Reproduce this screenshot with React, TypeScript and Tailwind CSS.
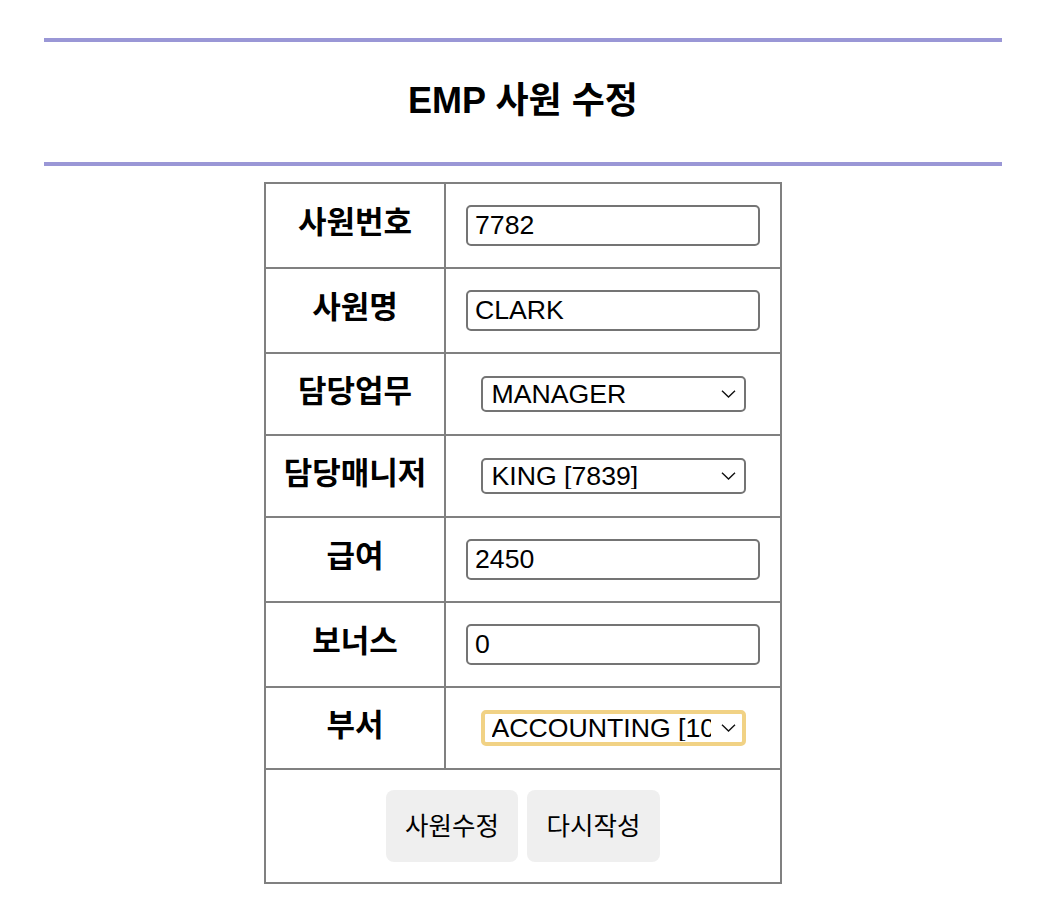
import React, { useState } from 'react';

type Field = {
  label: string;
  kind: 'input' | 'select';
  value: string;
  options?: string[];
  focused?: boolean;
};

const fields: Field[] = [
  { label: '사원번호', kind: 'input', value: '7782' },
  { label: '사원명', kind: 'input', value: 'CLARK' },
  { label: '담당업무', kind: 'select', value: 'MANAGER', options: ['ANALYST', 'CLERK', 'MANAGER', 'PRESIDENT', 'SALESMAN'] },
  { label: '담당매니저', kind: 'select', value: 'KING [7839]', options: ['KING [7839]', 'JONES [7566]', 'BLAKE [7698]'] },
  { label: '급여', kind: 'input', value: '2450' },
  { label: '보너스', kind: 'input', value: '0' },
  {
    label: '부서',
    kind: 'select',
    value: 'ACCOUNTING [10]',
    options: ['ACCOUNTING [10]', 'RESEARCH [20]', 'SALES [30]', 'OPERATIONS [40]'],
    focused: true,
  },
];

const Chevron = () => (
  <svg
    className="pointer-events-none absolute right-[10px] top-1/2 -translate-y-1/2 w-[15px] h-[9px]"
    viewBox="0 0 15 9"
    fill="none"
    stroke="#111"
    strokeWidth={1.4}
  >
    <path d="M1 1.2l6.5 6.3L14 1.2" />
  </svg>
);

const Row = ({ field, onChange }: { field: Field; onChange: (v: string) => void }) => {
  const height = field.kind === 'input' ? 'h-[85px]' : 'h-[82px]';
  return (
    <div className={`flex ${height} border-b-2 border-[#808080]`}>
      <div className="w-[180px] shrink-0 border-r-2 border-[#808080] flex items-center justify-center pb-1 text-[31px] font-bold text-black">
        {field.label}
      </div>
      <div className="flex-1 flex items-center justify-center">
        {field.kind === 'input' ? (
          <input
            type="text"
            value={field.value}
            onChange={(e) => onChange(e.target.value)}
            className="w-[294px] h-[41px] px-[7px] border-2 border-[#747474] rounded-[5px] bg-white text-[26.67px] text-black outline-none font-['Liberation_Sans',sans-serif]"
          />
        ) : (
          <div className="relative w-[265px] h-[36px]">
            <select
              value={field.value}
              onChange={(e) => onChange(e.target.value)}
              className={`appearance-none w-full h-full pr-[31px] rounded-[5px] bg-white text-[26.67px] leading-none text-black outline-none overflow-hidden whitespace-nowrap font-['Liberation_Sans',sans-serif] ${
                field.focused ? 'border-[4px] border-[#f1d285] pl-[7px]' : 'border-2 border-[#747474] pl-[9px]'
              }`}
            >
              {field.options?.map((o) => (
                <option key={o} value={o}>
                  {o}
                </option>
              ))}
            </select>
            <Chevron />
          </div>
        )}
      </div>
    </div>
  );
};

export default function App() {
  const [data, setData] = useState(fields);

  const update = (i: number, v: string) =>
    setData((prev) => prev.map((f, idx) => (idx === i ? { ...f, value: v } : f)));

  return (
    <div className="w-[1038px] min-h-[904px] bg-white font-['Liberation_Sans','Noto_Sans_CJK_KR',sans-serif]">
      <div className="ml-[44px] w-[958px] pt-[38px]">
        <div className="h-[128px] border-y-4 border-[#9a97d6] flex items-center justify-center pb-[2px]">
          <h3 className="text-[36px] font-bold leading-none text-black">EMP 사원 수정</h3>
        </div>

        <form className="mt-4 flex justify-center" onSubmit={(e) => e.preventDefault()}>
          <div className="w-[518px] border-2 border-[#808080]">
            {data.map((f, i) => (
              <Row key={f.label} field={f} onChange={(v) => update(i, v)} />
            ))}
            <div className="h-[112px] flex items-center justify-center gap-[9px]">
              <button
                type="submit"
                className="w-[132px] h-[72px] rounded-[8px] bg-[#efefef] text-[25.5px] text-black"
              >
                사원수정
              </button>
              <button
                type="reset"
                onClick={() => setData(fields)}
                className="w-[133px] h-[72px] rounded-[8px] bg-[#efefef] text-[25.5px] text-black"
              >
                다시작성
              </button>
            </div>
          </div>
        </form>
      </div>
    </div>
  );
}
